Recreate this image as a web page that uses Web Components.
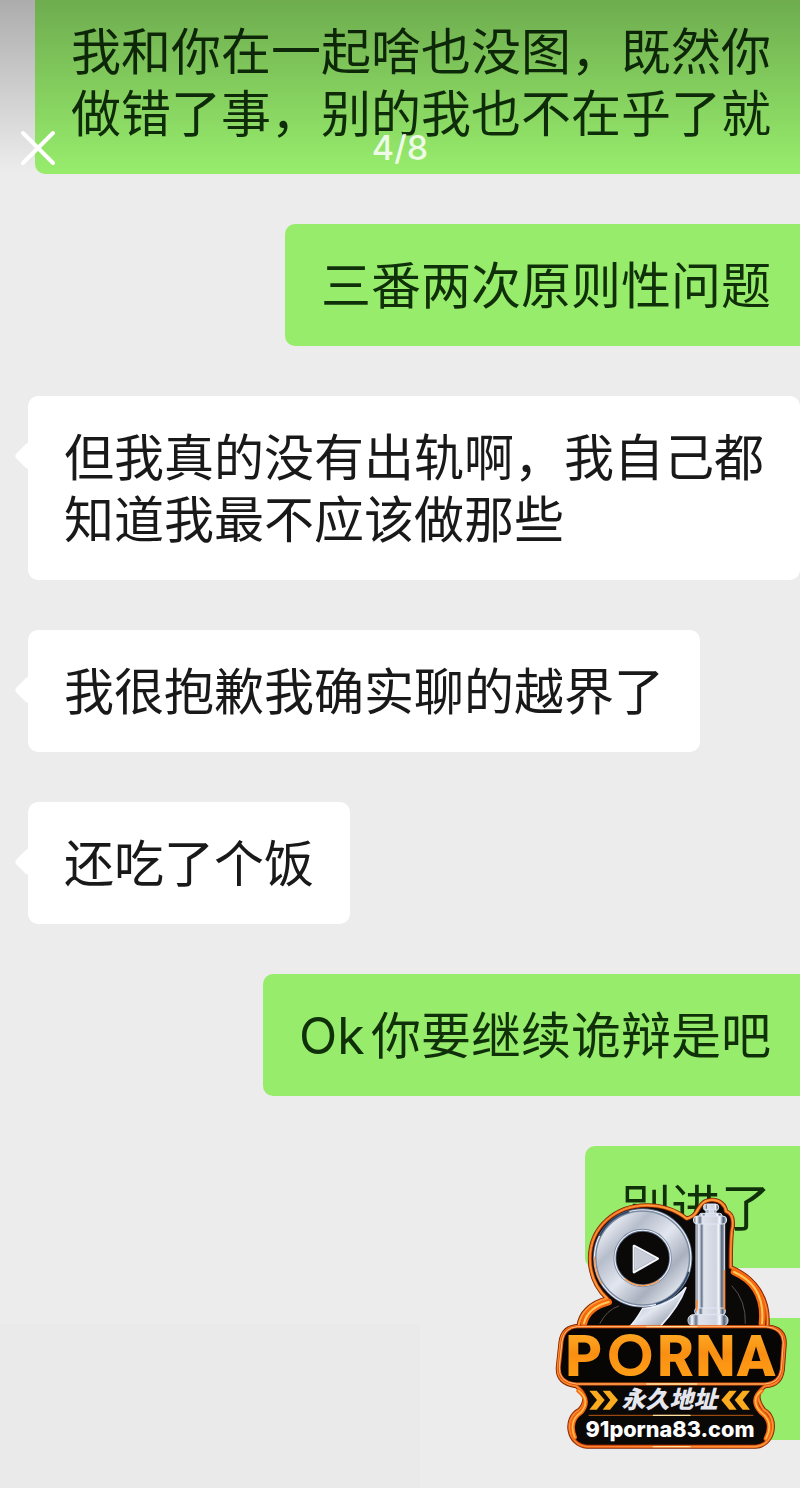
<!DOCTYPE html>
<html lang="zh-CN">
<head>
<meta charset="utf-8">
<meta name="viewport" content="width=device-width, initial-scale=1">
<title>聊天记录</title>
<style>
  body { margin: 0; background: #ececec; }
</style>
</head>
<body>
<chat-viewer>
  <viewer-bar slot="bar" count="4/8"></viewer-bar>
  <chat-bubble side="sent" cut>我和你在一起啥也没图，既然你做错了事，别的我也不在乎了就</chat-bubble>
  <chat-bubble side="sent">三番两次原则性问题</chat-bubble>
  <chat-bubble side="received">但我真的没有出轨啊，我自己都知道我最不应该做那些</chat-bubble>
  <chat-bubble side="received">我很抱歉我确实聊的越界了</chat-bubble>
  <chat-bubble side="received">还吃了个饭</chat-bubble>
  <chat-bubble side="sent">Ok你要继续诡辩是吧</chat-bubble>
  <chat-bubble side="sent">别进了</chat-bubble>
  <chat-bubble side="sent" empty></chat-bubble>
  <site-badge slot="badge"></site-badge>
</chat-viewer>

<template id="viewer-tpl">
  <style>
    :host {
      display: block; position: relative; overflow: hidden; min-height: 100vh;
      box-sizing: border-box; padding-bottom: 48px; background: #ececec;
      font-family: Inter, "Noto Sans CJK SC", sans-serif; color: #191919;
    }
    main { position: relative; display: flex; flex-direction: column; gap: 50px; padding-left: 28px; }
    .haze { position: absolute; left: 0; bottom: 0; width: 420px; height: 164px; background: #eaeaeb; }
  </style>
  <div class="haze"></div>
  <main><slot></slot></main>
  <slot name="bar"></slot>
  <slot name="badge"></slot>
</template>

<template id="bubble-tpl">
  <style>
    :host {
      display: block; position: relative; box-sizing: border-box; max-width: 772px;
      padding: 31px 36px 29px; border-radius: 10px; font-size: 50px; line-height: 62px;
      min-height: 122px; line-break: anywhere; text-autospace: normal;
    }
    :host([side="sent"]) {
      align-self: flex-end; max-width: 765px; padding-right: 29px;
      border-radius: 10px 0 0 10px; background: #97ec6c; color: #10300a;
    }
    :host([side="received"]) { align-self: flex-start; background: #fff; }
    :host([side="received"])::before {
      content: ""; position: absolute; left: -10px; top: 50px; width: 20px; height: 20px;
      border-radius: 4px; background: #fff; transform: rotate(45deg);
    }
    :host([cut]) { padding-top: 21px; border-top-left-radius: 0; }
    :host([empty]) { width: 214px; }
    p { margin: 0; }
  </style>
  <p><slot></slot></p>
</template>

<template id="bar-tpl">
  <style>
    :host {
      position: absolute; inset: 0 0 auto 0; height: 172px; box-sizing: border-box;
      display: grid; grid-template-columns: 1fr auto 1fr; align-items: end; padding: 0 16px 2px;
      background: linear-gradient(rgba(0,0,0,.27), rgba(0,0,0,.16) 40%, transparent);
      color: #fff;
    }
    button { border: 0; background: none; padding: 0; width: 44px; height: 44px; display: grid; place-items: center; }
    svg { width: 36px; height: 36px; display: block; }
    span { font: 500 34px/44px Inter, sans-serif; color: rgba(255,255,255,.85); }
  </style>
  <button type="button" aria-label="关闭">
    <svg viewBox="0 0 36 36" fill="none" stroke="#fff" stroke-width="4" stroke-linecap="round"><path d="M3 3 33 33M33 3 3 33"/></svg>
  </button>
  <span></span>
</template>

<template id="badge-tpl">
  <style>
    :host { position: absolute; right: 0; bottom: 18px; width: 260px; }
    svg { display: block; width: 100%; height: auto; }
  </style>
  <svg viewBox="0 0 780 870" role="img" aria-label="91 PORNA 永久地址 91porna83.com">
    <defs>
      <linearGradient id="chrome" x1="0" y1="0" x2="1" y2="1">
        <stop offset="0" stop-color="#f4f7fc"/><stop offset=".25" stop-color="#b6bdcb"/>
        <stop offset=".5" stop-color="#e2e6ef"/><stop offset=".75" stop-color="#a9b0be"/><stop offset="1" stop-color="#eef2f8"/>
      </linearGradient>
      <linearGradient id="pillar" x1="0" x2="1" y1="0" y2="0">
        <stop offset="0" stop-color="#4b5769"/><stop offset=".1" stop-color="#f6f9ff"/><stop offset=".2" stop-color="#65738a"/>
        <stop offset=".27" stop-color="#dfe3ec"/><stop offset=".7" stop-color="#cfd3df"/><stop offset=".8" stop-color="#f8fbff"/>
        <stop offset=".9" stop-color="#536177"/><stop offset="1" stop-color="#bdc6d6"/>
      </linearGradient>
      <linearGradient id="gold" x1="0" x2="0" y1="0" y2="1">
        <stop offset="0" stop-color="#ffb52a"/><stop offset=".45" stop-color="#f98f12"/><stop offset=".8" stop-color="#ff9d16"/><stop offset="1" stop-color="#ffd060"/>
      </linearGradient>
      <linearGradient id="rim" x1="0" x2="1" y1="0" y2="1">
        <stop offset="0" stop-color="#e24a08"/><stop offset=".3" stop-color="#ff8a20"/><stop offset=".6" stop-color="#e8520a"/><stop offset="1" stop-color="#ff7c18"/>
      </linearGradient>
      <path id="outline" d="M150 236C150 140 228 76 320 76C370 76 410 92 440 116Q460 110 468 98C478 84 484 62 512 60C540 58 556 76 558 94Q582 102 578 140Q572 160 572 262C640 290 690 350 682 440Q734 444 734 490L728 570Q722 616 676 618C642 640 656 668 672 690C714 710 706 796 646 800H142C82 796 70 714 118 690C138 668 142 640 108 618Q50 610 54 560L62 486Q68 440 116 438C120 400 150 368 202 356C170 326 150 286 150 236Z"/>
      <path id="plate" d="M112 440H676Q728 442 730 488L724 568Q718 610 674 612H110Q54 608 58 558L66 484Q72 442 112 440Z"/>
    </defs>
    <g stroke-linejoin="round">
      <use href="#outline" fill="#0b0908" stroke="#7c2204" stroke-width="13"/>
      <use href="#outline" fill="none" stroke="url(#rim)" stroke-width="8"/>
      <use href="#outline" fill="none" stroke="#ffb265" stroke-width="2"/>
      <g fill="none" stroke-linecap="round">
        <path stroke="#f8690e" stroke-width="20" d="M132 430C140 396 168 376 206 366M582 276C642 302 674 352 666 430"/>
        <path stroke="#ffc95c" stroke-width="6" d="M132 430C140 396 168 376 206 366M582 276C642 302 674 352 666 430"/>
        <path stroke="#f8690e" stroke-width="14" d="M116 632Q152 660 124 696Q84 722 104 772M664 632Q630 660 662 696Q704 726 678 776"/>
        <path stroke="#ffbd50" stroke-width="5" d="M116 632Q152 660 124 696Q84 722 104 772M664 632Q630 660 662 696Q704 726 678 776"/>
        <path stroke="#57504c" stroke-width="3" d="M180 430Q200 390 236 378M576 318Q618 360 616 430"/>
      </g>
    </g>
    <g fill="none">
      <circle cx="308" cy="234" r="114" stroke="#59677e" stroke-width="70"/>
      <circle cx="308" cy="234" r="114" stroke="#eef4ff" stroke-width="65"/>
      <circle cx="308" cy="234" r="114" stroke="#7d8ba0" stroke-width="58"/>
      <circle cx="308" cy="234" r="113" stroke="url(#chrome)" stroke-width="51"/>
      <path d="M179 168A145 145 0 0 1 268 94M348 373A145 145 0 0 0 446 275" stroke="#2d4567" stroke-width="5"/>
      <path d="M163 230A145 145 0 0 0 185 312M254 296A82 82 0 0 0 358 300" stroke="#ff9e4d" stroke-width="4"/>
    </g>
    <path d="M282 198 353 236 282 276Z" fill="#c9cdd8" stroke="#f4f6fb" stroke-width="8" stroke-linejoin="round"/>
    <path d="M284 202 347 236 284 271Z" fill="none" stroke="#9098a8" stroke-width="2"/>
    <path d="M438 322Q416 382 360 440H268Q282 430 308 386Q390 378 438 322Z" fill="url(#chrome)" stroke="#eaf1fc" stroke-width="5"/>
    <g fill="url(#pillar)" stroke="#dfe8f6" stroke-width="3">
      <rect x="490" y="72" width="46" height="20" rx="10"/>
      <rect x="498" y="88" width="30" height="18"/>
      <rect x="478" y="100" width="68" height="14" rx="7"/>
      <rect x="468" y="126" width="86" height="266"/>
      <rect x="460" y="108" width="100" height="24" rx="12"/>
      <rect x="464" y="384" width="92" height="20" rx="9"/>
      <rect x="444" y="404" width="120" height="34" rx="16"/>
    </g>
    <path d="M470 360V392M553 270V390" stroke="#ff8c32" stroke-width="5"/>
    <use href="#plate" fill="#080605" stroke="#e85a0c" stroke-width="9"/>
    <use href="#plate" fill="none" stroke="#ffc27a" stroke-width="3"/>
    <g font-family="Roboto, sans-serif" font-weight="900" font-size="170" fill="url(#gold)" text-anchor="middle">
      <text x="132" y="589">P</text><text x="271" y="589" font-family="Lato, sans-serif">O</text><text x="407" y="589">R</text><text x="526" y="589">N</text><text x="648" y="589">A</text>
    </g>
    <g fill="#fbab1e">
      <path d="M148 632H170L194 660 170 689H148L171 660Z"/><path d="M188 632H210L234 660 210 689H188L211 660Z"/>
      <path d="M590 632H568L544 660 568 689H590L568 660Z"/><path d="M630 632H608L584 660 608 689H630L608 660Z"/>
    </g>
    <text x="388" y="685" text-anchor="middle" font-family="Noto Sans CJK SC, sans-serif" font-weight="900" font-style="italic" font-size="72" fill="#e6e7ee">永久地址</text>
    <path d="M146 706H640" stroke="#b95812" stroke-width="3"/>
    <path d="M340 706H450M320 612H470M320 440H470M340 800H450" stroke="#ffe0a0" stroke-width="4" stroke-linecap="round"/>
    <text x="390" y="770" text-anchor="middle" font-family="Inter, sans-serif" font-weight="800" font-size="65" fill="#fff">91porna83.com</text>
  </svg>
</template>

<script>
  const stamp = (host, id) => {
    const root = host.attachShadow({ mode: "open" });
    root.append(document.getElementById(id).content.cloneNode(true));
    return root;
  };
  class ChatViewer extends HTMLElement {
    constructor() { super(); stamp(this, "viewer-tpl"); }
  }
  class ChatBubble extends HTMLElement {
    constructor() { super(); stamp(this, "bubble-tpl"); }
  }
  class ViewerBar extends HTMLElement {
    constructor() {
      super();
      stamp(this, "bar-tpl").querySelector("span").textContent = this.getAttribute("count");
    }
  }
  class SiteBadge extends HTMLElement {
    constructor() { super(); stamp(this, "badge-tpl"); }
  }
  customElements.define("chat-viewer", ChatViewer);
  customElements.define("chat-bubble", ChatBubble);
  customElements.define("viewer-bar", ViewerBar);
  customElements.define("site-badge", SiteBadge);
</script>
</body>
</html>
